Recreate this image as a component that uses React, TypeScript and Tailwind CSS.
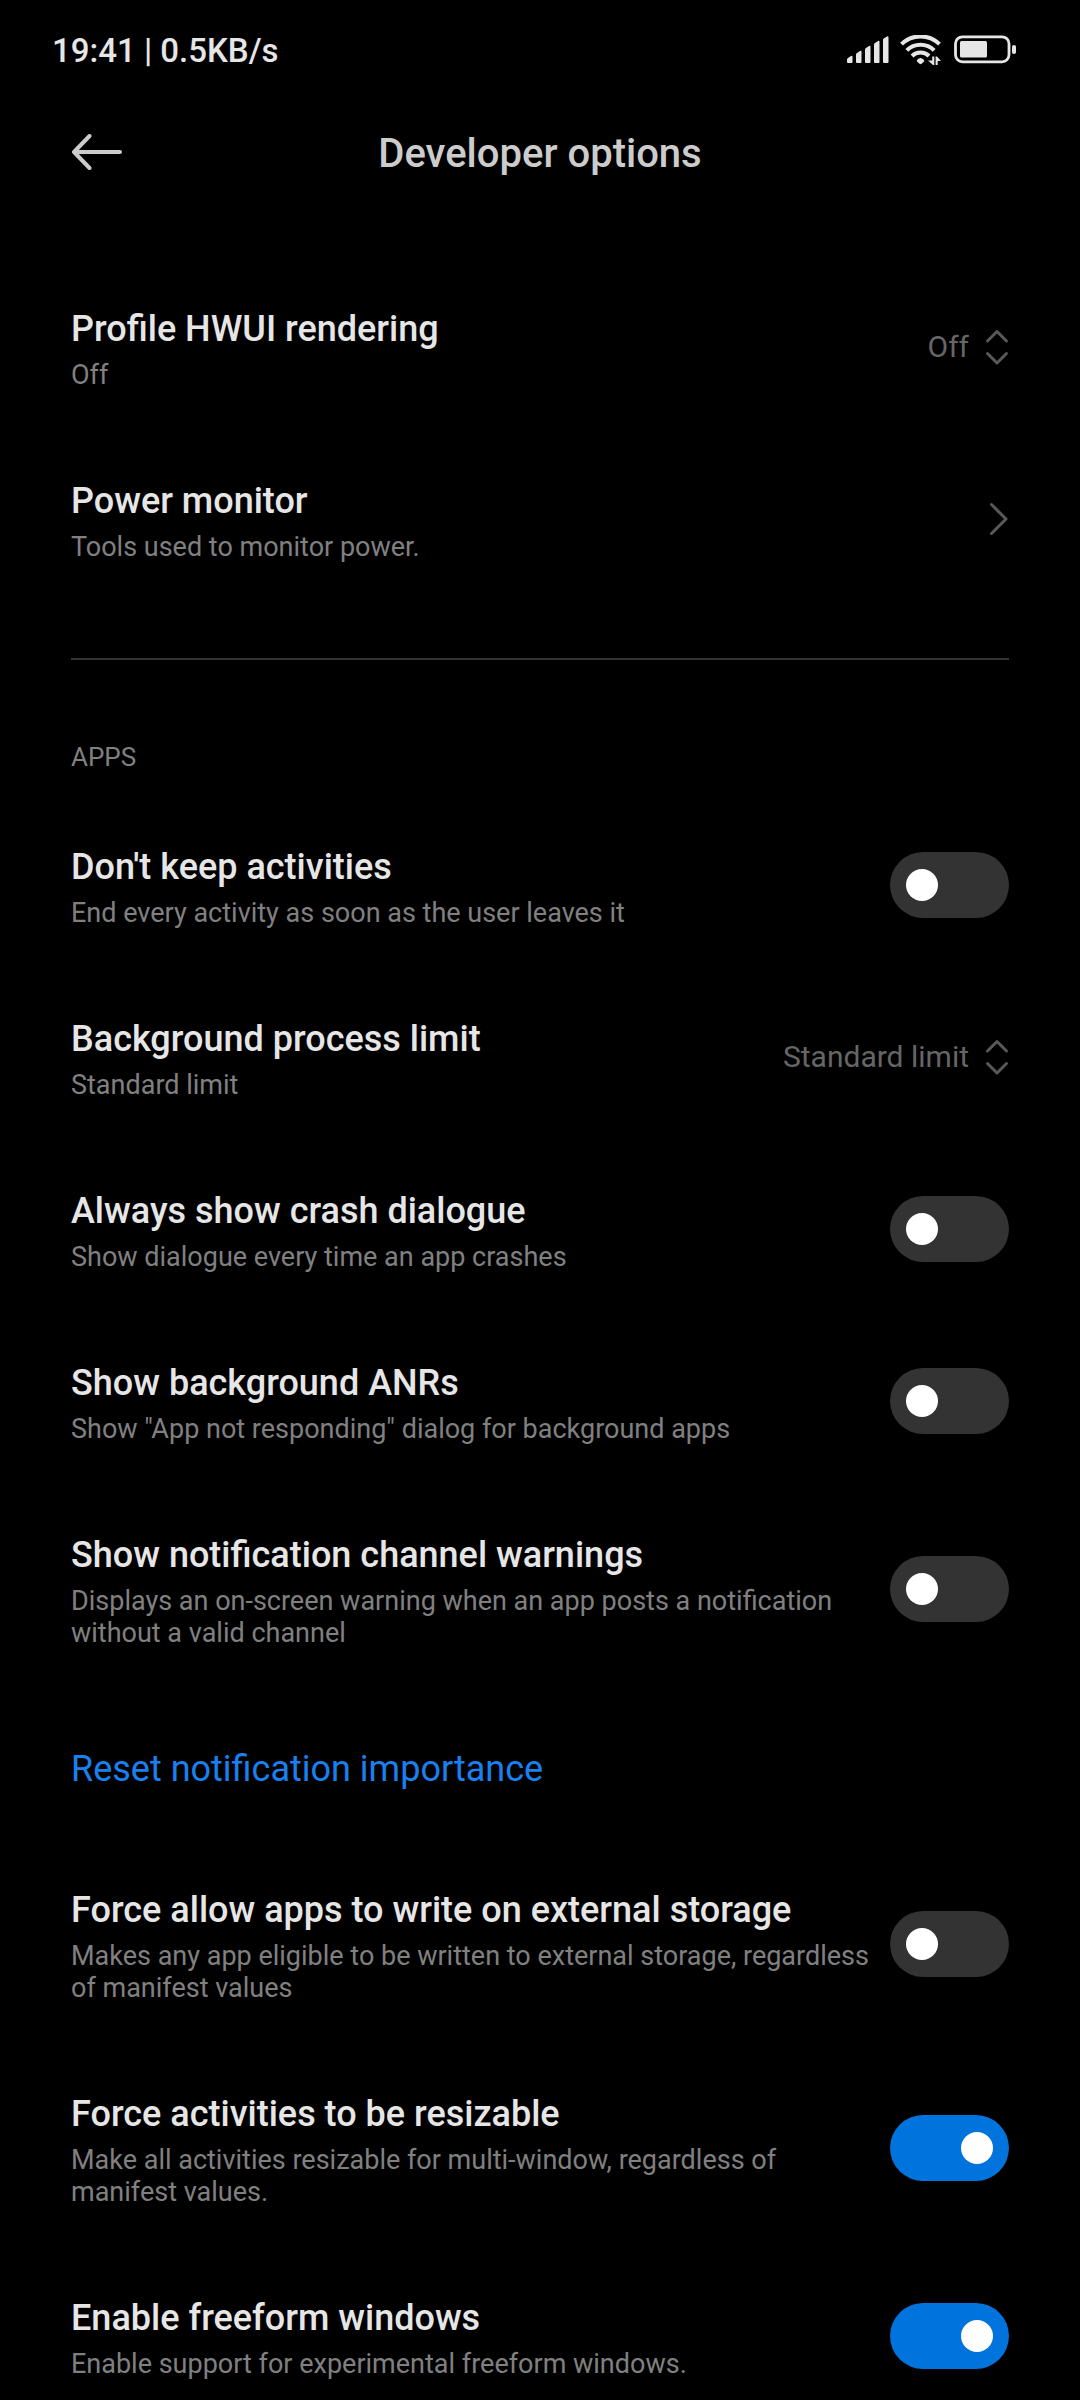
import { useId, useState, type ReactNode } from "react";

type Item =
  | { kind: "toggle"; title: string; summary: string; on?: boolean }
  | { kind: "choice"; title: string; summary: string; value: string }
  | { kind: "link"; title: string; summary: string }
  | { kind: "action"; title: string };

const GENERAL: Item[] = [
  { kind: "choice", title: "Profile HWUI rendering", summary: "Off", value: "Off" },
  { kind: "link", title: "Power monitor", summary: "Tools used to monitor power." },
];

const APPS: Item[] = [
  {
    kind: "toggle",
    title: "Don't keep activities",
    summary: "End every activity as soon as the user leaves it",
  },
  {
    kind: "choice",
    title: "Background process limit",
    summary: "Standard limit",
    value: "Standard limit",
  },
  {
    kind: "toggle",
    title: "Always show crash dialogue",
    summary: "Show dialogue every time an app crashes",
  },
  {
    kind: "toggle",
    title: "Show background ANRs",
    summary: 'Show "App not responding" dialog for background apps',
  },
  {
    kind: "toggle",
    title: "Show notification channel warnings",
    summary:
      "Displays an on-screen warning when an app posts a notification without a valid channel",
  },
  { kind: "action", title: "Reset notification importance" },
  {
    kind: "toggle",
    title: "Force allow apps to write on external storage",
    summary:
      "Makes any app eligible to be written to external storage, regardless of manifest values",
  },
  {
    kind: "toggle",
    title: "Force activities to be resizable",
    summary:
      "Make all activities resizable for multi-window, regardless of manifest values.",
    on: true,
  },
  {
    kind: "toggle",
    title: "Enable freeform windows",
    summary: "Enable support for experimental freeform windows.",
    on: true,
  },
];

const ROW = "flex w-full items-center gap-[18px] pt-[41px] pb-[42px] text-left";

function SignalIcon() {
  return (
    <svg width="43" height="32" viewBox="0 0 43 32" fill="currentColor" aria-hidden>
      <path d="M1 24.5 Q1 23.5 2 23 L5 21 Q6.5 20.3 6.5 22 V27 Q6.5 28 5.5 28 H2 Q1 28 1 27Z" />
      <path d="M10 19.5 Q10 18.5 11 18 L14 16 Q15.5 15.3 15.5 17 V27 Q15.5 28 14.5 28 H11 Q10 28 10 27Z" />
      <path d="M19 14.5 Q19 13.5 20 13 L23 11 Q24.5 10.3 24.5 12 V27 Q24.5 28 23.5 28 H20 Q19 28 19 27Z" />
      <path d="M28 9.5 Q28 8.5 29 8 L32 6 Q33.5 5.3 33.5 7 V27 Q33.5 28 32.5 28 H29 Q28 28 28 27Z" />
      <path d="M37 4.8 Q37 3.8 38 3.2 L41 1.4 Q42.5 .7 42.5 2.4 V27 Q42.5 28 41.5 28 H38 Q37 28 37 27Z" />
    </svg>
  );
}

function WifiIcon() {
  return (
    <svg width="43" height="32" viewBox="0 0 43 32" fill="none" aria-hidden>
      <g stroke="currentColor" strokeWidth="4">
        <path d="M1.5 9.2 A27 27 0 0 1 39.500 9.2" />
        <path d="M6.8 15.4 A19.500 19.500 0 0 1 34.2 15.4" />
        <path d="M12 21 A12 12 0 0 1 29 21" />
      </g>
      <path
        d="M17.500 24.500 Q20.500 21.500 23.500 24.500 Q24.800 25.600 23.800 26.700 L21.500 28.800 Q20.500 29.600 19.500 28.800 L17.200 26.700 Q16.200 25.600 17.500 24.500Z"
        fill="currentColor"
      />
      <path
        d="M32.200 21.500 H34.300 V30 H33 L28 25.500 H32.200Z M35.600 30 V21.500 H37 L41 26 H37.700 V30Z"
        fill="currentColor"
      />
    </svg>
  );
}

function BatteryIcon() {
  return (
    <svg width="62" height="32" viewBox="0 0 62 32" fill="none" aria-hidden>
      <rect x="1.500" y="1.800" width="53.500" height="25" rx="7" stroke="currentColor" strokeWidth="2.800" />
      <rect x="6" y="6" width="27" height="16.500" rx="1.500" fill="currentColor" />
      <rect x="58" y="10" width="4" height="9" rx="2" fill="currentColor" />
    </svg>
  );
}

function StatusBar() {
  return (
    <div className="flex h-[102px] shrink-0 items-center justify-between pr-16 pl-[52px] text-[#e6e6e6]">
      <p className="text-[33px] leading-10 font-medium">19:41 | 0.5KB/s</p>
      <div className="flex items-center gap-[11px]">
        <SignalIcon />
        <WifiIcon />
        <BatteryIcon />
      </div>
    </div>
  );
}

function Header() {
  return (
    <header className="grid h-[104px] shrink-0 grid-cols-[1fr_auto_1fr] items-center px-[71px] text-[#cccccc]">
      <button type="button" aria-label="Back" className="justify-self-start">
        <svg width="52" height="40" viewBox="0 0 52 40" fill="none" aria-hidden>
          <path
            d="M18.500 2 L3 18 L18.500 34 M3 18 H49"
            stroke="currentColor"
            strokeWidth="4"
            strokeLinecap="round"
            strokeLinejoin="round"
          />
        </svg>
      </button>
      <h1 className="text-[40px] leading-[48px] font-medium">Developer options</h1>
    </header>
  );
}

function RowText({ title, summary }: { title: ReactNode; summary: string }) {
  return (
    <span className="min-w-0 flex-1">
      <span className="block text-4xl leading-[54px] font-medium text-[#e6e6e6]">{title}</span>
      <span className="mt-[3px] block text-[27px] leading-8 text-[#808080]">{summary}</span>
    </span>
  );
}

function ToggleRow({ title, summary, on = false }: { title: string; summary: string; on?: boolean }) {
  const [checked, setChecked] = useState(on);

  return (
    <label className={ROW}>
      <RowText title={title} summary={summary} />
      <input
        type="checkbox"
        role="switch"
        checked={checked}
        onChange={(e) => setChecked(e.target.checked)}
        className="flex h-[66px] w-[119px] shrink-0 appearance-none items-center rounded-full bg-[#333333] px-4 before:size-8 before:rounded-full before:bg-white checked:justify-end checked:bg-[#0073dd]"
      />
    </label>
  );
}

function ChoiceRow({ title, summary, value }: { title: string; summary: string; value: string }) {
  const id = useId();

  return (
    <div className={ROW}>
      <RowText title={<label htmlFor={id}>{title}</label>} summary={summary} />
      <div className="relative flex shrink-0 items-center">
        <select
          id={id}
          className="field-sizing-content appearance-none bg-transparent pr-10 text-[30px] leading-10 text-[#666666]"
        >
          <option>{value}</option>
        </select>
        <svg
          width="24"
          height="38"
          viewBox="0 0 24 38"
          fill="none"
          className="pointer-events-none absolute right-0 text-[#595959]"
          aria-hidden
        >
          <path
            d="M2.500 13 L12 3.500 L21.500 13 M2.500 25.500 L12 35 L21.500 25.500"
            stroke="currentColor"
            strokeWidth="3"
            strokeLinecap="round"
            strokeLinejoin="round"
          />
        </svg>
      </div>
    </div>
  );
}

function LinkRow({ title, summary }: { title: string; summary: string }) {
  return (
    <a href="#" className={ROW}>
      <RowText title={title} summary={summary} />
      <svg width="20" height="36" viewBox="0 0 20 36" fill="none" className="shrink-0 text-[#595959]" aria-hidden>
        <path
          d="M2.500 3.500 L17 18 L2.500 32.500"
          stroke="currentColor"
          strokeWidth="3"
          strokeLinecap="round"
          strokeLinejoin="round"
        />
      </svg>
    </a>
  );
}

function SettingRow({ item }: { item: Item }) {
  switch (item.kind) {
    case "toggle":
      return <ToggleRow title={item.title} summary={item.summary} on={item.on} />;
    case "choice":
      return <ChoiceRow title={item.title} summary={item.summary} value={item.value} />;
    case "link":
      return <LinkRow title={item.title} summary={item.summary} />;
    case "action":
      return (
        <button type="button" className="block w-full pt-[54px] pb-[49px] text-left text-4xl leading-[48px] text-[#1a80f0]">
          {item.title}
        </button>
      );
  }
}

export default function App() {
  return (
    <div className="flex h-screen flex-col bg-black font-[Roboto,sans-serif]">
      <StatusBar />
      <Header />
      <main className="min-h-0 flex-1 overflow-y-auto px-[71px] pt-[55px] [scrollbar-width:none]">
        <section>
          {GENERAL.map((item) => (
            <SettingRow key={item.title} item={item} />
          ))}
        </section>

        <section className="mt-[53px] border-t-2 border-[#333333] pt-[81px]">
          <h2 className="pb-[26px] text-[26px] leading-8 text-[#808080]">APPS</h2>
          {APPS.map((item) => (
            <SettingRow key={item.title} item={item} />
          ))}
        </section>
      </main>
    </div>
  );
}
